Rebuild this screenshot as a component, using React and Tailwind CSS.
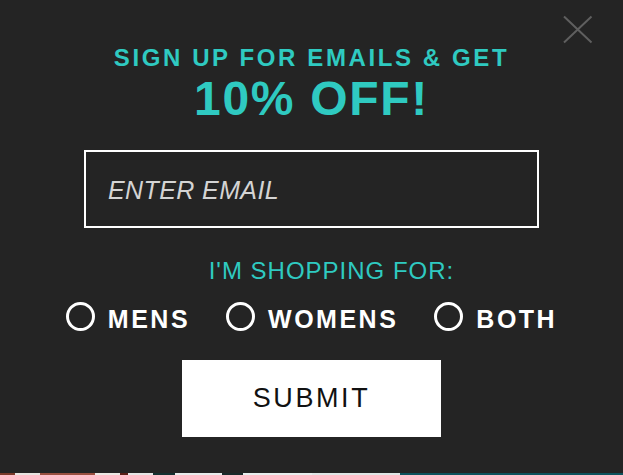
import React from 'react';

const options = ['MENS', 'WOMENS', 'BOTH'];

// bits of the page behind the popup, peeking out at the bottom edge
const strip = [
  'w-[15px] bg-[#7a3a2a]',
  'w-[25px] bg-[#e8e4e0]',
  'w-[55px] bg-[#9a5040]',
  'w-[25px] bg-[#ece8e4]',
  'w-[8px] bg-[#5a2018]',
  'w-[25px] bg-[#e6e6e6]',
  'w-[22px] bg-[#143030]',
  'w-[47px] bg-[#e8ecec]',
  'w-[21px] bg-[#1a2a2a]',
  'w-[69px] bg-[#e8eeee]',
  'w-[88px] bg-[#dfe6e6]',
  'flex-1 bg-[#0d525c]',
];

const CloseIcon = () => (
  <svg width="30" height="29" viewBox="0 0 30 29" fill="none">
    <path d="M1 1.5L28.5 27.5M28.5 1.5L1 27.5" stroke="#5f5f5f" strokeWidth="2" />
  </svg>
);

const App = () => {
  return (
    <div className="flex flex-col w-[623px] h-[475px] bg-[#242424] font-['Liberation_Sans',Arial,sans-serif]">
      <div className="relative flex-1 flex flex-col items-center pt-[46px]">
        <button className="absolute top-[15px] right-[30px]">
          <CloseIcon />
        </button>

        <h2 className="text-[24px] leading-none font-bold tracking-[2.6px] text-[#2fcac1]">
          SIGN UP FOR EMAILS &amp; GET
        </h2>
        <h1 className="mt-[5px] text-[48px] leading-none font-bold tracking-[1.7px] text-[#2fcac1]">
          10% OFF!
        </h1>

        <div className="mt-[27px] flex items-center w-[455px] h-[78px] border-2 border-white pl-[22px]">
          <span className="text-[25px] leading-none italic font-light text-[#d4d4d4] tracking-[0.4px] mt-[3px]">
            ENTER EMAIL
          </span>
        </div>

        <p className="mt-[31px] pl-[40px] text-[24px] leading-none tracking-[1px] text-[#2fcac1]">
          I&apos;M SHOPPING FOR:
        </p>

        <div className="mt-[19px] flex items-start gap-[36px]">
          {options.map((opt) => (
            <label key={opt} className="flex items-start gap-[13px]">
              <span className="w-[29px] h-[29px] rounded-full border-[3px] border-white" />
              <span className="mt-[5px] text-[25px] leading-none font-bold tracking-[2.5px] text-white">
                {opt}
              </span>
            </label>
          ))}
        </div>

        <button className="mt-[28px] flex items-center justify-center w-[259px] h-[77px] bg-white">
          <span className="text-[27px] leading-none tracking-[2.6px] text-[#111]">SUBMIT</span>
        </button>
      </div>

      <div className="flex h-[2px]">
        {strip.map((cls, i) => (
          <div key={i} className={cls} />
        ))}
      </div>
    </div>
  );
};

export default App;
